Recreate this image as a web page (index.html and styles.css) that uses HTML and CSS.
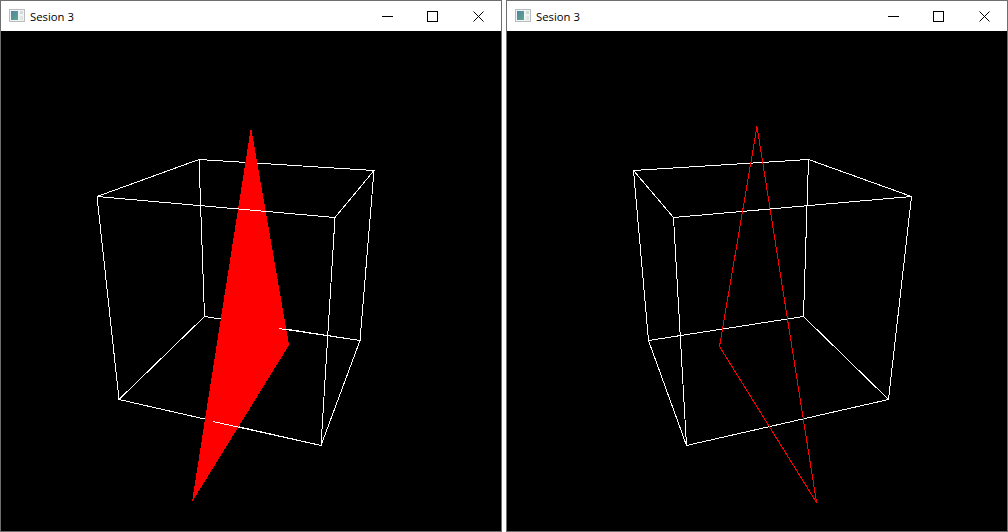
FILE: index.html
```html
<!DOCTYPE html>
<html lang="es">
<head>
<meta charset="utf-8">
<title>Sesion 3</title>
<link rel="stylesheet" href="styles.css">
</head>
<body>
<main class="desktop">
  <section class="window">
    <header class="titlebar">
      <svg class="app-icon" viewBox="0 0 16 16" width="16" height="16">
        <defs><linearGradient id="panel-a" x1="0" y1="0" x2="1" y2="1"><stop offset="0" stop-color="#4f83a3"/><stop offset="1" stop-color="#5fa88c"/></linearGradient></defs>
        <rect x="0.5" y="1.5" width="15" height="12" fill="#f2f4f4" stroke="#b9bdbf"/>
        <rect x="2" y="3" width="7" height="9" fill="url(#panel-a)"/>
        <rect x="11" y="3" width="3" height="3" fill="#cfdcda"/>
        <rect x="11" y="8" width="3" height="4" fill="#e0e6e4"/>
      </svg>
      <span class="title">Sesion 3</span>
      <div class="controls">
        <button class="ctl"><svg width="11" height="11" viewBox="0 0 11 11"><path class="glyph" d="M0 5.5H11"/></svg></button>
        <button class="ctl"><svg width="11" height="11" viewBox="0 0 11 11"><rect class="glyph" x="0.5" y="0.5" width="10" height="10"/></svg></button>
        <button class="ctl ctl-close"><svg width="11" height="11" viewBox="0 0 11 11"><path class="glyph glyph-x" d="M0.5 0.5L10.5 10.5M10.5 0.5L0.5 10.5"/></svg></button>
      </div>
    </header>
    <svg class="canvas" viewBox="1 31 500 500" width="500" height="500">
      <g class="wire">
        <path d="M97 196.5L199 159.5L374 170.5L335 217.5"/>
        <path d="M97 196.5L119 399.5L204.5 316.5L360 340.5L321 445.5L119 399.5"/>
        <path d="M199 159.5L204.5 316.5M374 170.5L360 340.5M335 217.5L321 445.5"/>
      </g>
      <polygon class="solid" points="251,127 289,345 192,502"/>
      <g class="wire">
        <path d="M97 196.5L335 217.5"/>
        <path d="M279 328.5L360 340.5"/>
        <path d="M213 421.5L321 445.5"/>
      </g>
    </svg>
  </section>
  <section class="window">
    <header class="titlebar">
      <svg class="app-icon" viewBox="0 0 16 16" width="16" height="16">
        <rect x="0.5" y="1.5" width="15" height="12" fill="#f2f4f4" stroke="#b9bdbf"/>
        <rect x="2" y="3" width="7" height="9" fill="url(#panel-a)"/>
        <rect x="11" y="3" width="3" height="3" fill="#cfdcda"/>
        <rect x="11" y="8" width="3" height="4" fill="#e0e6e4"/>
      </svg>
      <span class="title">Sesion 3</span>
      <div class="controls">
        <button class="ctl"><svg width="11" height="11" viewBox="0 0 11 11"><path class="glyph" d="M0 5.5H11"/></svg></button>
        <button class="ctl"><svg width="11" height="11" viewBox="0 0 11 11"><rect class="glyph" x="0.5" y="0.5" width="10" height="10"/></svg></button>
        <button class="ctl ctl-close"><svg width="11" height="11" viewBox="0 0 11 11"><path class="glyph glyph-x" d="M0.5 0.5L10.5 10.5M10.5 0.5L0.5 10.5"/></svg></button>
      </div>
    </header>
    <svg class="canvas" viewBox="507 31 500 500" width="500" height="500">
      <g class="wire">
        <path d="M633.5 170.5L808.5 159.5L911.5 196.5L673.5 217.5L633.5 170.5"/>
        <path d="M633.5 170.5L648.5 340.5L686.5 445.5L888.5 399.5L803.5 316.5L648.5 340.5"/>
        <path d="M808.5 159.5L803.5 316.5M911.5 196.5L888.5 399.5M673.5 217.5L686.5 445.5"/>
      </g>
      <polygon class="outline" points="757,126.5 719.5,346.5 816.5,502.5"/>
    </svg>
  </section>
</main>
</body>
</html>
```
FILE: styles.css
```css
html, body { margin: 0; padding: 0; background: #fff; }
.desktop { display: flex; gap: 4px; width: 1008px; height: 532px; overflow: hidden; }
.window { display: flex; flex-direction: column; width: 502px; height: 532px; box-sizing: border-box; border: 1px solid #6e6e6e; background: #000; }
.titlebar { display: flex; align-items: center; height: 30px; flex: none; background: #fff; padding-left: 8px; }
.app-icon { display: block; flex: none; }
.title { margin-left: 5px; font: 11.3px "Open Sans", "Noto Sans", sans-serif; color: #000; }
.controls { display: flex; margin-left: auto; }
.ctl { display: flex; align-items: center; justify-content: center; width: 45px; height: 29px; padding: 0; border: 0; background: transparent; }
.ctl-close { margin-left: 1px; }
.ctl svg { display: block; }
.glyph { fill: none; stroke: #000; stroke-width: 1; shape-rendering: crispEdges; }
.glyph-x { shape-rendering: auto; }
.canvas { display: block; flex: none; background: #000; }
.wire path { fill: none; stroke: #fff; stroke-width: 1; shape-rendering: crispEdges; }
.solid { fill: #f00; shape-rendering: crispEdges; }
.outline { fill: none; stroke: #f00; stroke-width: 1; shape-rendering: crispEdges; }
```
